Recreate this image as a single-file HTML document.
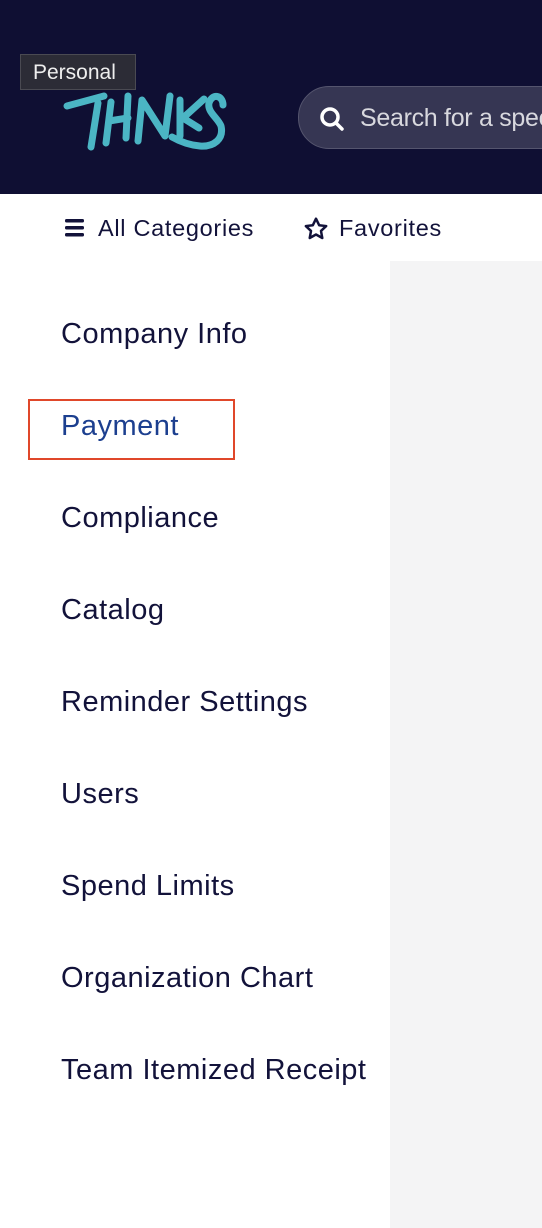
<!DOCTYPE html>
<html><head><style>
body{margin:0;width:542px;height:1228px;overflow:hidden;font-family:"Liberation Sans",sans-serif;background:#f4f4f5;position:relative}
.hdr{position:absolute;left:0;top:0;width:542px;height:194px;background:#0f0f33;overflow:hidden}
.tag{position:absolute;left:20px;top:54px;width:116px;height:36px;background:#2c2c36;border:1px solid #4a4a52;color:#eee;font-size:21px;line-height:35px;box-sizing:border-box;padding-left:12px}
.search{position:absolute;left:298px;top:86px;width:300px;height:63px;border-radius:31px;background:#363653;border:1px solid #55556e;box-sizing:border-box}
.search span{position:absolute;left:61px;top:17px;color:#d8d8de;font-size:25px;letter-spacing:-0.3px}
.nav{position:absolute;left:0;top:194px;width:542px;height:67px;background:#fff}
.nav div{position:absolute;top:21px;font-size:23.5px;color:#12123a;letter-spacing:0.7px}
.side{position:absolute;left:0;top:261px;width:390px;height:967px;background:#fff}
.it{position:absolute;left:61px;font-size:29px;color:#12123a;letter-spacing:0.5px}
</style></head><body>
<div class="hdr">
<svg style="position:absolute;left:0;top:0" width="260" height="194" fill="none" stroke="#4bb5c4" stroke-width="7" stroke-linecap="round" stroke-linejoin="round">
<path d="M67 106 L104 96"/><path d="M98 103 L91 147"/>
<path d="M111 102 L106 143"/><path d="M128 96 L126 138"/><path d="M109 121 L128 118"/>
<path d="M138 141 L142 100 L165 136 L170 96"/>
<path d="M180 100 L180 136"/><path d="M204 99 L183 118 L199 128"/>
<path d="M223 105 C223 95 212 93 209 103 C207 112 218 118 221 126 C224 139 214 147 200 146 C188 145 179 141 172 137"/>
</svg>
<div class="tag">Personal</div>
<div class="search">
<svg style="position:absolute;left:20px;top:19px" width="28" height="28" fill="none" stroke="#fff" stroke-width="3.5" stroke-linecap="round"><circle cx="11" cy="11" r="8"/><path d="M17 17 L23 23"/></svg>
<span>Search for a specific</span></div>
</div>
<div class="nav">
<svg style="position:absolute;left:64px;top:24px" width="22" height="20"><rect x="1" y="1" width="19" height="3.5" rx="1.5" fill="#12123a"/><rect x="1" y="8" width="19" height="3.5" rx="1.5" fill="#12123a"/><rect x="1" y="15" width="19" height="3.5" rx="1.5" fill="#12123a"/></svg>
<div style="left:98px">All Categories</div>
<svg style="position:absolute;left:303px;top:22px" width="26" height="26" viewBox="0 0 24 24" fill="none" stroke="#12123a" stroke-width="2.3" stroke-linejoin="round"><path d="M12 2.5l2.9 6 6.5.8-4.8 4.5 1.2 6.5L12 17.1l-5.8 3.2 1.2-6.5L2.6 9.3l6.5-.8z"/></svg>
<div style="left:339px">Favorites</div>
</div>
<div class="side">
<div class="it" style="top:57px">Company Info</div>
<div class="it" style="top:149px;color:#1c3f8f">Payment</div>
<div style="position:absolute;left:28px;top:138px;width:207px;height:61px;border:2.5px solid #e0472a;box-sizing:border-box"></div>
<div class="it" style="top:241px">Compliance</div>
<div class="it" style="top:333px">Catalog</div>
<div class="it" style="top:425px">Reminder Settings</div>
<div class="it" style="top:517px">Users</div>
<div class="it" style="top:609px">Spend Limits</div>
<div class="it" style="top:701px">Organization Chart</div>
<div class="it" style="top:793px">Team Itemized Receipt</div>
</div>
</body></html>
